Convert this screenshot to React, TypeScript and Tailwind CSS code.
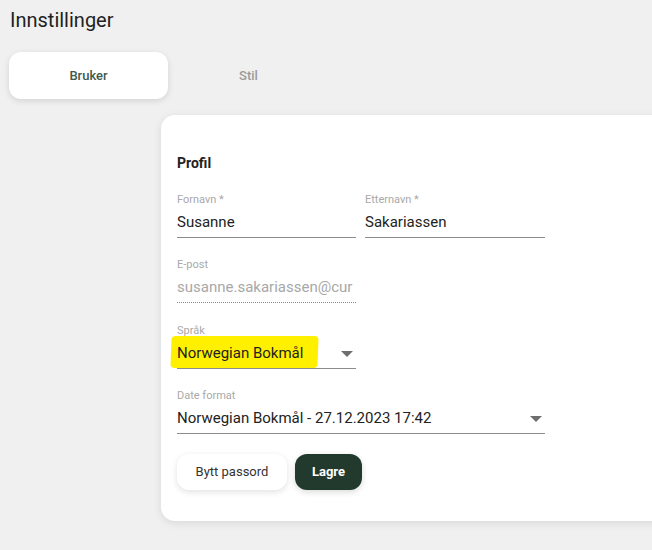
import React from 'react';

function Field({
  label,
  value,
  width,
  muted = false,
  dotted = false,
  select = false,
  highlight = false,
}: {
  label: string;
  value: string;
  width: string;
  muted?: boolean;
  dotted?: boolean;
  select?: boolean;
  highlight?: boolean;
}) {
  return (
    <div className={width}>
      <div className="text-[11px] leading-[14px] text-[#a9a9a9]">{label}</div>
      <div
        className={
          'relative flex items-center h-[30px] mt-[1px] ' +
          (dotted ? 'border-b border-dotted border-[#8a8a8a]' : 'border-b border-[#8c8c8c]')
        }
      >
        {highlight && (
          <div className="absolute left-[-6px] top-[-3px] w-[147px] h-[32px] bg-[#fff000] rounded-[4px] -skew-x-2" />
        )}
        <span
          className={
            'relative flex-1 overflow-hidden whitespace-nowrap text-[15px] ' +
            (muted ? 'text-[#a8a8a8]' : 'text-[#222]')
          }
        >
          {value}
        </span>
        {select && (
          <svg width="12" height="6" viewBox="0 0 12 6" className="relative mr-[3px]">
            <path d="M0 0h12L6 6z" fill="#6e6e6e" />
          </svg>
        )}
      </div>
    </div>
  );
}

export default function App() {
  return (
    <div
      className="w-[652px] h-[550px] overflow-hidden bg-[#f0f0f0] text-[#222]"
      style={{ fontFamily: 'Roboto, "Liberation Sans", sans-serif' }}
    >
      <h1 className="pl-[10px] pt-[7px] text-[20px] leading-[26px] text-[#222]">Innstillinger</h1>

      <div className="flex mt-[19px] pl-[9px]">
        <div className="w-[159px] h-[47px] flex items-center justify-center rounded-[12px] bg-white shadow-[0_2px_6px_rgba(0,0,0,0.12)] text-[13px] font-medium text-[#3f5a4c]">
          Bruker
        </div>
        <div className="w-[161px] h-[47px] flex items-center justify-center text-[13px] font-medium text-[#9a9a9a]">
          Stil
        </div>
      </div>

      <div className="pl-[161px] mt-[16px]">
        <div className="w-[560px] h-[406px] rounded-[14px] bg-white shadow-[0_2px_8px_rgba(0,0,0,0.1)] pl-[16px] pt-[39px]">
          <h2 className="text-[14px] font-bold text-[#222] leading-[18px]">Profil</h2>

          <div className="flex gap-[9px] mt-[21px]">
            <Field label="Fornavn *" value="Susanne" width="w-[179px]" />
            <Field label="Etternavn *" value="Sakariassen" width="w-[180px]" />
          </div>

          <div className="mt-[20px]">
            <Field
              label="E-post"
              value="susanne.sakariassen@cur"
              width="w-[179px]"
              muted
              dotted
            />
          </div>

          <div className="mt-[21px]">
            <Field label="Språk" value="Norwegian Bokmål" width="w-[179px]" select highlight />
          </div>

          <div className="mt-[20px]">
            <Field
              label="Date format"
              value="Norwegian Bokmål - 27.12.2023 17:42"
              width="w-[368px]"
              select
            />
          </div>

          <div className="flex gap-[8px] mt-[20px]">
            <button className="h-[36px] w-[110px] rounded-[12px] bg-white shadow-[0_2px_6px_rgba(0,0,0,0.12)] text-[13px] text-[#333]">
              Bytt passord
            </button>
            <button className="h-[36px] w-[67px] rounded-[12px] bg-[#213a2d] shadow-[0_2px_6px_rgba(0,0,0,0.15)] text-[13px] font-bold text-white">
              Lagre
            </button>
          </div>
        </div>
      </div>
    </div>
  );
}
